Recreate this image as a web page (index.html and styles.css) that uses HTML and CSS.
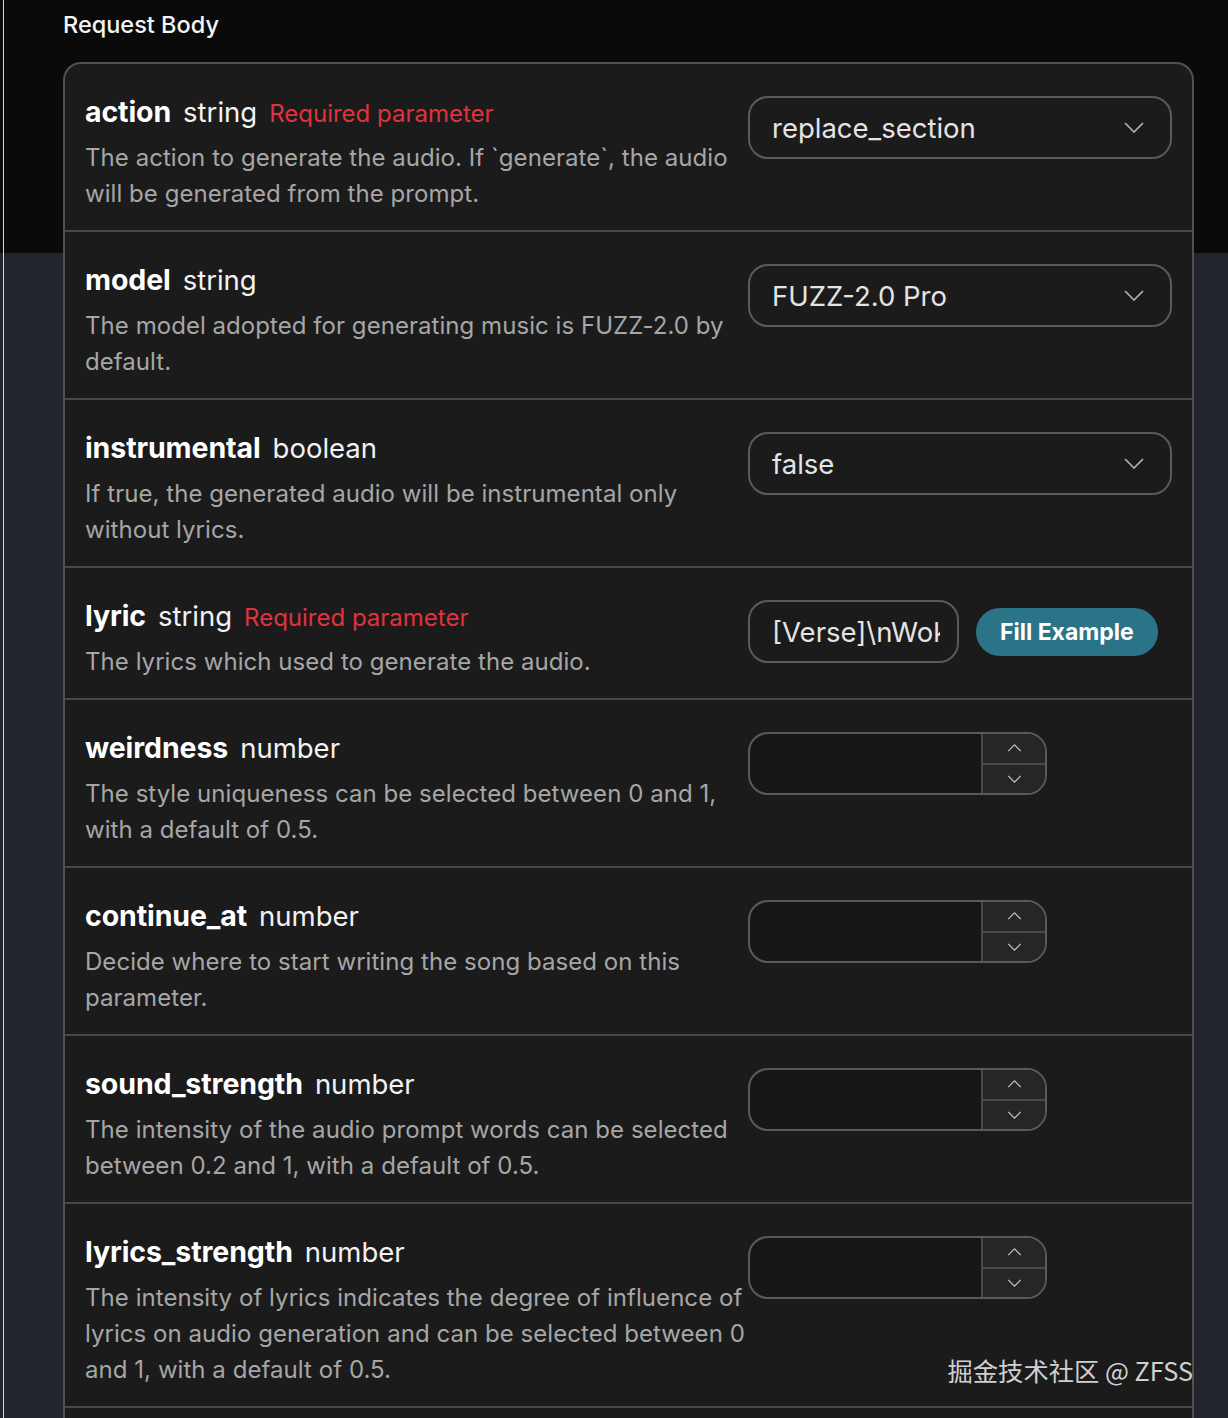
FILE: index.html
```html
<!DOCTYPE html>
<html lang="en">
<head>
<meta charset="utf-8">
<title>Request Body</title>
<link rel="stylesheet" href="styles.css">
</head>
<body>
<div class="page">
  <div class="frame">
    <h2 class="heading">Request Body</h2>
    <div class="card">
      <div class="row">
        <div class="info">
          <div class="title"><span class="name">action</span><span class="type">string</span><span class="req">Required parameter</span></div>
          <p class="desc">The action to generate the audio. If `generate`, the audio will be generated from the prompt.</p>
        </div>
        <div class="control">
          <div class="select"><span>replace_section</span><svg class="chev" viewBox="0 0 20 11"><path d="M1 1 L10 10 L19 1"/></svg></div>
        </div>
      </div>
      <div class="row">
        <div class="info">
          <div class="title"><span class="name">model</span><span class="type">string</span></div>
          <p class="desc">The model adopted for generating music is FUZZ-2.0 by default.</p>
        </div>
        <div class="control">
          <div class="select"><span>FUZZ-2.0 Pro</span><svg class="chev" viewBox="0 0 20 11"><path d="M1 1 L10 10 L19 1"/></svg></div>
        </div>
      </div>
      <div class="row">
        <div class="info">
          <div class="title"><span class="name">instrumental</span><span class="type">boolean</span></div>
          <p class="desc">If true, the generated audio will be instrumental only without lyrics.</p>
        </div>
        <div class="control">
          <div class="select"><span>false</span><svg class="chev" viewBox="0 0 20 11"><path d="M1 1 L10 10 L19 1"/></svg></div>
        </div>
      </div>
      <div class="row">
        <div class="info">
          <div class="title"><span class="name">lyric</span><span class="type">string</span><span class="req">Required parameter</span></div>
          <p class="desc">The lyrics which used to generate the audio.</p>
        </div>
        <div class="control">
          <div class="text-input"><span class="text-value">[Verse]\nWok</span></div>
          <button class="fill">Fill Example</button>
        </div>
      </div>
      <div class="row">
        <div class="info">
          <div class="title"><span class="name">weirdness</span><span class="type">number</span></div>
          <p class="desc">The style uniqueness can be selected between 0 and 1, with a default of 0.5.</p>
        </div>
        <div class="control">
          <div class="number"><div class="num-field"></div><div class="spin"><div class="spin-btn"><svg viewBox="0 0 16 9"><path d="M1 8 L8 1 L15 8"/></svg></div><div class="spin-btn"><svg viewBox="0 0 16 9"><path d="M1 1 L8 8 L15 1"/></svg></div></div></div>
        </div>
      </div>
      <div class="row">
        <div class="info">
          <div class="title"><span class="name">continue_at</span><span class="type">number</span></div>
          <p class="desc">Decide where to start writing the song based on this parameter.</p>
        </div>
        <div class="control">
          <div class="number"><div class="num-field"></div><div class="spin"><div class="spin-btn"><svg viewBox="0 0 16 9"><path d="M1 8 L8 1 L15 8"/></svg></div><div class="spin-btn"><svg viewBox="0 0 16 9"><path d="M1 1 L8 8 L15 1"/></svg></div></div></div>
        </div>
      </div>
      <div class="row">
        <div class="info">
          <div class="title"><span class="name">sound_strength</span><span class="type">number</span></div>
          <p class="desc">The intensity of the audio prompt words can be selected between 0.2 and 1, with a default of 0.5.</p>
        </div>
        <div class="control">
          <div class="number"><div class="num-field"></div><div class="spin"><div class="spin-btn"><svg viewBox="0 0 16 9"><path d="M1 8 L8 1 L15 8"/></svg></div><div class="spin-btn"><svg viewBox="0 0 16 9"><path d="M1 1 L8 8 L15 1"/></svg></div></div></div>
        </div>
      </div>
      <div class="row">
        <div class="info">
          <div class="title"><span class="name">lyrics_strength</span><span class="type">number</span></div>
          <p class="desc">The intensity of lyrics indicates the degree of influence of lyrics on audio generation and can be selected between 0 and 1, with a default of 0.5.</p>
        </div>
        <div class="control">
          <div class="number"><div class="num-field"></div><div class="spin"><div class="spin-btn"><svg viewBox="0 0 16 9"><path d="M1 8 L8 1 L15 8"/></svg></div><div class="spin-btn"><svg viewBox="0 0 16 9"><path d="M1 1 L8 8 L15 1"/></svg></div></div></div>
        </div>
        <div class="watermark">掘金技术社区 @ ZFSS</div>
      </div>
      <div class="row row-last"></div>
    </div>
  </div>
</div>
</body>
</html>
```

FILE: styles.css
```css
* { box-sizing: border-box; }
html, body { margin: 0; padding: 0; }
body {
  background: #22262c;
  font-family: Inter, "Noto Sans", "Noto Sans CJK SC", sans-serif;
  color: #e8e8e8;
  height: 1418px;
  overflow: hidden;
}
.page {
  background: linear-gradient(#0a0a0a 0, #0a0a0a 253px, #22262c 253px);
  padding-left: 3px;
  min-height: 1418px;
}
.frame {
  border-left: 1px solid #d8d8d8;
  padding: 0 35px 0 59px;
  min-height: 1418px;
}
.heading {
  margin: 0;
  padding-top: 10px;
  height: 62px;
  font-size: 23.5px;
  font-weight: 500;
  color: #f4f4f4;
  line-height: 30px;
}
.card {
  width: 1131px;
  background: #1b1b1c;
  border: 2px solid #515151;
  border-bottom: none;
  border-radius: 18px 18px 0 0;
}
.row {
  position: relative;
  display: flex;
  align-items: flex-start;
  padding: 30px 20px 18px 20px;
  border-top: 2px solid #474747;
}
.row:first-child { border-top: none; }
.row-last { height: 40px; }
.info {
  width: 662px;
  flex: none;
}
.title {
  display: flex;
  align-items: baseline;
  gap: 12px;
  height: 36px;
  line-height: 36px;
  white-space: nowrap;
}
.name { font-size: 28.5px; font-weight: 700; color: #ffffff; letter-spacing: -0.1px; }
.type { font-size: 27.5px; font-weight: 400; color: #f2f2f2; }
.req { font-size: 24px; color: #e3313c; }
.desc {
  margin: 10px 0 0 0;
  font-size: 24px;
  letter-spacing: 0.05px;
  line-height: 36px;
  color: #a6a6a6;
}
.control {
  margin-left: 1px;
  margin-top: 2px;
  display: flex;
  align-items: center;
  gap: 17px;
}
.select {
  width: 424px;
  height: 63px;
  border: 2px solid #5a5a5a;
  border-radius: 20px;
  display: flex;
  align-items: center;
  justify-content: space-between;
  padding: 0 26px 0 22px;
  font-size: 27.5px;
  color: #e4e4e4;
}
.chev {
  width: 20px;
  height: 11px;
  fill: none;
  stroke: #b5b5b5;
  stroke-width: 1.6;
}
.text-input {
  width: 211px;
  height: 63px;
  border: 2px solid #5a5a5a;
  border-radius: 20px;
  display: flex;
  align-items: center;
  padding: 0 0 0 22px;
  font-size: 27.5px;
  color: #e4e4e4;
  overflow: hidden;
  white-space: nowrap;
}
.text-value {
  display: block;
  width: 168px;
  overflow: hidden;
}
.fill {
  height: 48px;
  padding: 0 24px;
  border: none;
  border-radius: 24px;
  background: #2b7487;
  color: #ffffff;
  font-family: inherit;
  font-size: 23px;
  font-weight: 700;
}
.number {
  width: 299px;
  height: 63px;
  border: 2px solid #5a5a5a;
  border-radius: 20px;
  display: flex;
  overflow: hidden;
  background: #161617;
}
.num-field { flex: 1; }
.spin {
  width: 64px;
  border-left: 2px solid #4a4a4a;
  background: #262627;
  display: flex;
  flex-direction: column;
}
.spin-btn {
  flex: 1;
  display: flex;
  align-items: center;
  justify-content: center;
}
.spin-btn + .spin-btn { border-top: 2px solid #4a4a4a; }
.spin-btn svg {
  width: 15px;
  height: 8px;
  fill: none;
  stroke: #c4c4c4;
  stroke-width: 1.4;
}
.watermark {
  position: absolute;
  right: -1px;
  bottom: 18px;
  line-height: 36px;
  font-size: 25.3px;
  color: #d0d0d0;
  font-family: "Noto Sans CJK SC", "Noto Sans", sans-serif;
}
```
